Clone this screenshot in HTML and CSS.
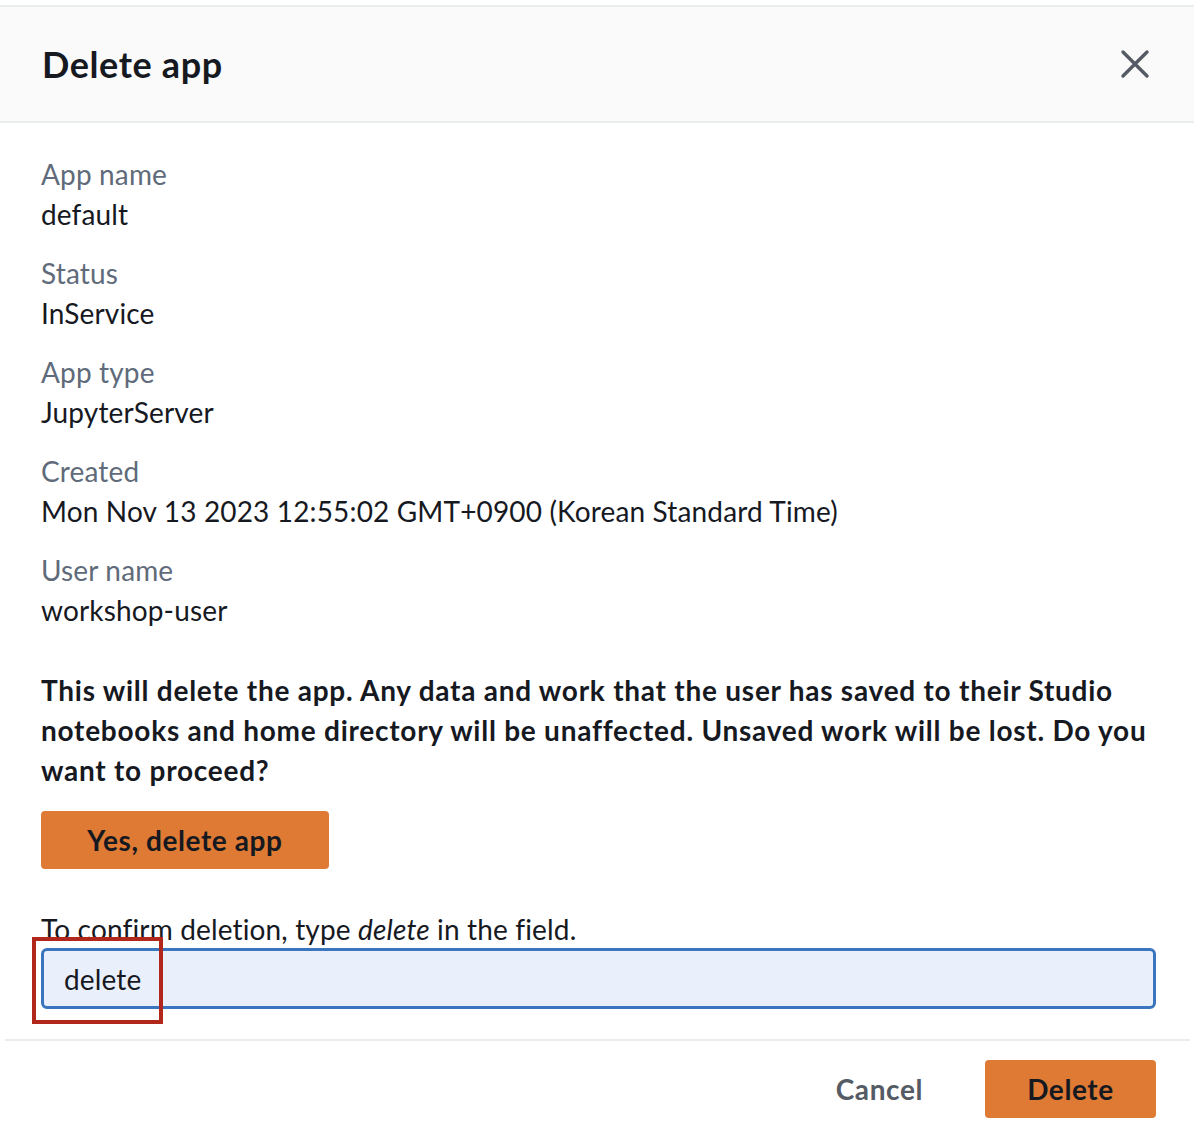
FILE: index.html
```html
<!DOCTYPE html>
<html lang="en">
<head>
<meta charset="utf-8">
<title>Delete app</title>
<link rel="stylesheet" href="styles.css">
</head>
<body>
<div class="modal">
  <header class="modal-header">
    <h1 class="modal-title">Delete app</h1>
    <button class="close-btn" aria-label="Close">
      <svg width="30" height="30" viewBox="0 0 30 30"><path d="M3 3 L27 27 M27 3 L3 27" stroke="#545b64" stroke-width="3.4" stroke-linecap="round" fill="none"/></svg>
    </button>
  </header>
  <main class="modal-body">
    <dl class="details">
      <div class="item"><dt>App name</dt><dd>default</dd></div>
      <div class="item"><dt>Status</dt><dd>InService</dd></div>
      <div class="item"><dt>App type</dt><dd>JupyterServer</dd></div>
      <div class="item"><dt>Created</dt><dd>Mon Nov 13 2023 12:55:02 GMT+0900 (Korean Standard Time)</dd></div>
      <div class="item"><dt>User name</dt><dd>workshop-user</dd></div>
    </dl>
    <p class="warning">This will delete the app. Any data and work that the user has saved to their Studio notebooks and home directory will be unaffected. Unsaved work will be lost. Do you want to proceed?</p>
    <button class="btn-primary btn-yes">Yes, delete app</button>
    <label class="confirm-label" for="confirm">To confirm deletion, type <em>delete</em> in the field.</label>
    <div class="input-wrap">
      <input id="confirm" class="confirm-input" type="text" value="delete">
      <span class="highlight"></span>
    </div>
  </main>
  <footer class="modal-footer">
    <button class="btn-link">Cancel</button>
    <button class="btn-primary btn-delete">Delete</button>
  </footer>
</div>
</body>
</html>
```

FILE: styles.css
```css
* { box-sizing: border-box; }
html, body { margin: 0; padding: 0; background: #fff; }
body {
  font-family: "Lato", "Open Sans", sans-serif;
  color: #16191f;
  font-size: 28px;
  line-height: 40px;
  letter-spacing: 0.15px;
}
.modal { padding-top: 5px; }
.modal-header {
  display: flex;
  align-items: center;
  justify-content: space-between;
  height: 118px;
  padding: 0 44px 0 42px;
  background: #fafafa;
  border-top: 2px solid #eaeded;
  border-bottom: 2px solid #eaeded;
}
.modal-title {
  margin: 0;
  font-size: 36px;
  font-weight: 700;
  line-height: 44px;
  letter-spacing: 0.6px;
}
.close-btn {
  border: 0;
  background: none;
  padding: 0;
  width: 30px;
  height: 30px;
  display: flex;
}
.modal-body {
  padding: 31px 38px 0 41px;
}
.details { margin: 0; display: flex; flex-direction: column; gap: 19px; }
.item dt { color: #5f6b7a; }
.item dd { margin: 0; }
.warning {
  margin: 40px 0 21px;
  font-weight: 700;
  letter-spacing: 0.75px;
}
.btn-primary {
  font-family: inherit;
  font-size: 28px;
  font-weight: 700;
  letter-spacing: 0.6px;
  color: #16191f;
  background: #df7a34;
  border: 0;
  border-radius: 4px;
  height: 58px;
  cursor: pointer;
}
.btn-yes { width: 288px; display: block; }
.confirm-label { display: block; margin-top: 40px; }
.confirm-label em { font-style: italic; }
.input-wrap { position: relative; margin-top: -1px; }
.confirm-input {
  display: block;
  width: 100%;
  height: 61px;
  font-family: inherit;
  font-size: 28px;
  letter-spacing: 0.15px;
  color: #16191f;
  background: #e9f0fc;
  border: 3px solid #3a75bd;
  border-radius: 6px;
  padding: 0 20px;
  outline: none;
}
.highlight {
  position: absolute;
  left: -9px;
  top: -11px;
  width: 131px;
  height: 87px;
  border: 4px solid #b1271c;
}
.modal-footer {
  margin-top: 30px;
  border-top: 2px solid #eaeded;
  margin-left: 5px;
  margin-right: 4px;
  display: flex;
  justify-content: flex-end;
  align-items: center;
  gap: 22px;
  padding: 19px 34px 0 0;
}
.btn-link {
  font-family: inherit;
  font-size: 28px;
  font-weight: 700;
  letter-spacing: 0.6px;
  color: #545b64;
  background: none;
  border: 0;
  padding: 0 40px;
  height: 58px;
}
.btn-delete { width: 171px; }
```
